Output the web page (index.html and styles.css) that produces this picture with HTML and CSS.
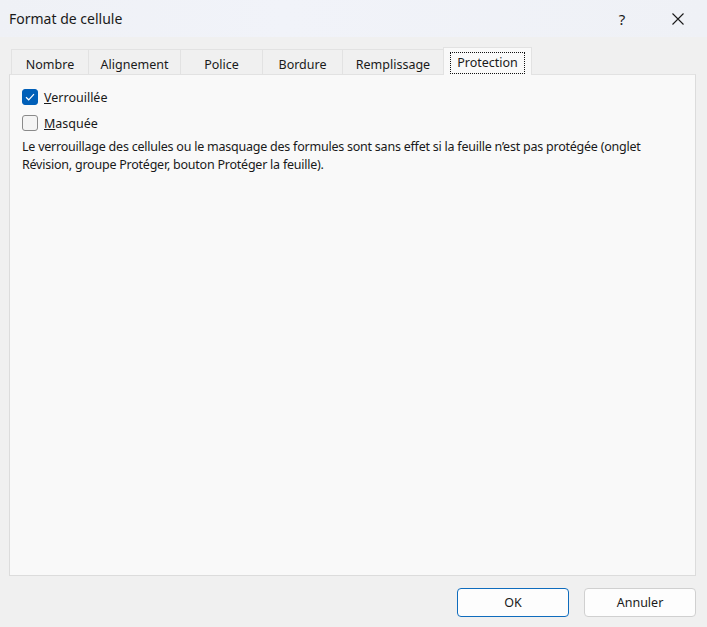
FILE: index.html
```html
<!DOCTYPE html>
<html lang="fr">
  <head>
    <meta charset="UTF-8" />
    <title>Format de cellule</title>
    <link rel="stylesheet" href="styles.css">
  </head>
  <body>
    <div class="dialog">
      <div class="titlebar">
        <span class="title">Format de cellule</span>
        <span class="help">?</span>
        <span class="close">
          <svg width="12" height="12" viewBox="0 0 12 12"><path d="M0.5 0.5L11.5 11.5M11.5 0.5L0.5 11.5" stroke="#1a1a1a" stroke-width="1.1" fill="none"/></svg>
        </span>
      </div>
      <div class="content">
        <div class="tabs">
          <div class="tab" style="width:78px">Nombre</div>
          <div class="tab" style="width:92px">Alignement</div>
          <div class="tab" style="width:82px">Police</div>
          <div class="tab" style="width:80px">Bordure</div>
          <div class="tab" style="width:101px">Remplissage</div>
          <div class="tab active" style="width:89px"><span class="focus">Protection</span></div>
        </div>
        <div class="panel">
          <label class="check">
            <span class="box checked">
              <svg width="10" height="8" viewBox="0 0 10 8"><path d="M1 4.2L3.7 6.8L9 1.2" stroke="#fff" stroke-width="1.2" fill="none"/></svg>
            </span>
            <span><u>V</u>errouillée</span>
          </label>
          <label class="check">
            <span class="box"></span>
            <span><u>M</u>asquée</span>
          </label>
          <p class="note">Le verrouillage des cellules ou le masquage des formules sont sans effet si la feuille n’est pas protégée (onglet Révision, groupe Protéger, bouton Protéger la feuille).</p>
        </div>
        <div class="buttons">
          <button class="btn primary">OK</button>
          <button class="btn">Annuler</button>
        </div>
      </div>
    </div>
  </body>
</html>
```

FILE: styles.css
```css
body {
  margin: 0;
  font-family: "Noto Sans", "Open Sans", sans-serif;
  color: #1a1a1a;
  background-color: #f0f0f0;
}
.dialog {
  width: 707px;
  height: 627px;
  display: flex;
  flex-direction: column;
}
.titlebar {
  height: 37px;
  background: linear-gradient(90deg, #eff1f6, #f1f3f9 40%, #eff1f6);
  display: flex;
  align-items: center;
  padding-left: 9px;
  font-size: 14px;
}
.title {
  flex: 1;
}
.help {
  width: 20px;
  margin-right: 40px;
  font-size: 15px;
  text-align: center;
}
.close {
  width: 12px;
  margin-right: 23px;
  display: flex;
}
.content {
  flex: 1;
  padding: 11px 11px 0 9px;
  display: flex;
  flex-direction: column;
}
.tabs {
  display: flex;
  align-items: flex-end;
  padding-left: 2px;
  height: 26px;
  font-size: 12.5px;
}
.tab {
  box-sizing: border-box;
  height: 25px;
  border: 1px solid #e2e2e2;
  border-bottom: none;
  border-left: none;
  display: flex;
  align-items: center;
  justify-content: center;
  padding-top: 4px;
}
.tab:first-child {
  border-left: 1px solid #e2e2e2;
}
.tab.active {
  height: 28px;
  margin-left: -1px;
  margin-bottom: -1px;
  padding-top: 3px;
  border-left: 1px solid #e2e2e2;
  background-color: #f9f9f9;
  position: relative;
  z-index: 1;
}
.focus {
  border: 1px dotted #111;
  padding: 1px 6px 2px;
}
.panel {
  box-sizing: border-box;
  height: 502px;
  background-color: #f9f9f9;
  border: 1px solid #dcdcdc;
  border-top-color: #e2e2e2;
  padding: 14px 12px 0 12px;
  font-size: 12.5px;
}
.check {
  display: flex;
  align-items: center;
  gap: 6px;
  height: 16px;
  margin-bottom: 10px;
}
.box {
  box-sizing: border-box;
  width: 16px;
  height: 16px;
  border: 1px solid #8a8a8a;
  border-radius: 3px;
  background-color: #f4f4f4;
  display: flex;
  align-items: center;
  justify-content: center;
}
.box.checked {
  background-color: #005fb8;
  border-color: #005fb8;
}
.note {
  margin: -3px 0 0;
  line-height: 18px;
  letter-spacing: -0.23px;
}
.buttons {
  display: flex;
  justify-content: flex-end;
  gap: 15px;
  padding-top: 12px;
}
.btn {
  box-sizing: border-box;
  width: 112px;
  height: 29px;
  font-family: inherit;
  font-size: 12.5px;
  color: #1a1a1a;
  background-color: #fdfdfd;
  border: 1px solid #d0d0d0;
  border-radius: 4px;
}
.btn.primary {
  border: 1.5px solid #0f6cbd;
}
```
